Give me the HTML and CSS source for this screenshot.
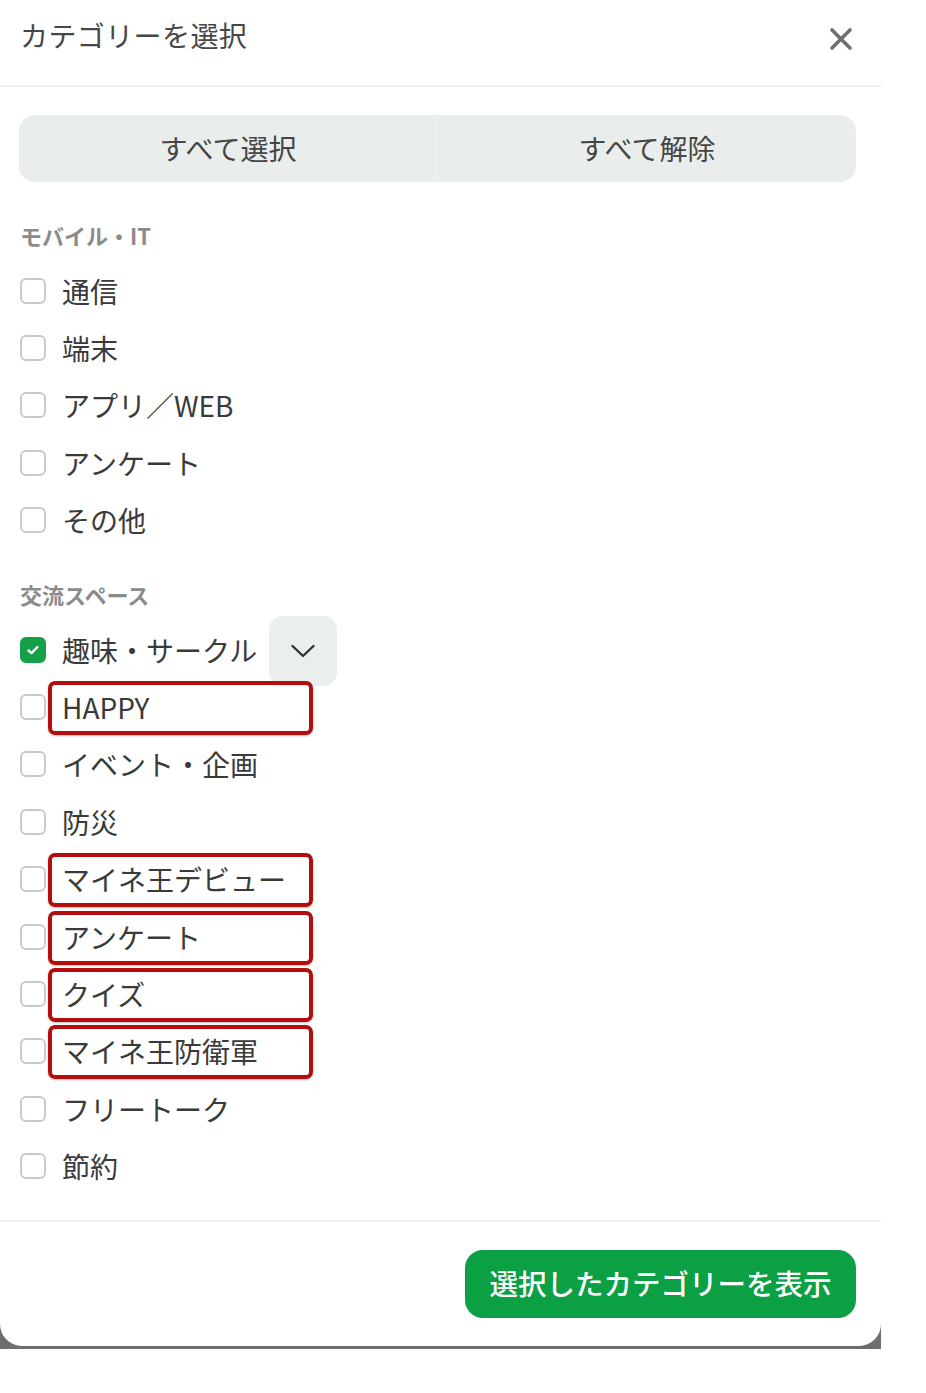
FILE: index.html
```html
<!DOCTYPE html>
<html lang="ja">
<head>
<meta charset="utf-8">
<title>カテゴリーを選択</title>
<link rel="stylesheet" href="styles.css">
</head>
<body>
<div class="frame">
  <div class="modal">
    <header class="modal-header">
      <h1 class="modal-title">カテゴリーを選択</h1>
      <button class="close-btn" aria-label="閉じる">
        <svg width="24" height="24" viewBox="0 0 24 24"><path d="M3 3 L21 21 M21 3 L3 21" stroke="#6f6f6f" stroke-width="3.6" stroke-linecap="round" fill="none"/></svg>
      </button>
    </header>

    <div class="modal-body">
      <div class="toggle-group">
        <button class="toggle-btn">すべて選択</button>
        <button class="toggle-btn toggle-right">すべて解除</button>
      </div>

      <section class="section">
        <h2 class="section-title">モバイル・IT</h2>
        <ul class="items">
          <li class="item"><span class="box"></span><span class="label">通信</span></li>
          <li class="item"><span class="box"></span><span class="label">端末</span></li>
          <li class="item"><span class="box"></span><span class="label">アプリ／WEB</span></li>
          <li class="item"><span class="box"></span><span class="label">アンケート</span></li>
          <li class="item"><span class="box"></span><span class="label">その他</span></li>
        </ul>
      </section>

      <section class="section section-2">
        <h2 class="section-title">交流スペース</h2>
        <ul class="items">
          <li class="item">
            <span class="box checked">
              <svg width="16" height="16" viewBox="0 0 16 16"><path d="M3.5 8.5 L6.5 11.2 L12.5 5" stroke="#fff" stroke-width="2.4" stroke-linecap="round" stroke-linejoin="round" fill="none"/></svg>
            </span>
            <span class="label">趣味・サークル</span>
            <button class="expand-btn" aria-label="開く">
              <svg width="26" height="16" viewBox="0 0 26 16"><path d="M2.5 3 L13 13 L23.5 3" stroke="#333" stroke-width="2.4" stroke-linecap="round" stroke-linejoin="round" fill="none"/></svg>
            </button>
          </li>
          <li class="item"><span class="box"></span><span class="label marked">HAPPY</span></li>
          <li class="item"><span class="box"></span><span class="label">イベント・企画</span></li>
          <li class="item"><span class="box"></span><span class="label">防災</span></li>
          <li class="item"><span class="box"></span><span class="label marked">マイネ王デビュー</span></li>
          <li class="item"><span class="box"></span><span class="label marked">アンケート</span></li>
          <li class="item"><span class="box"></span><span class="label marked">クイズ</span></li>
          <li class="item"><span class="box"></span><span class="label marked">マイネ王防衛軍</span></li>
          <li class="item"><span class="box"></span><span class="label">フリートーク</span></li>
          <li class="item"><span class="box"></span><span class="label">節約</span></li>
        </ul>
      </section>
    </div>

    <footer class="modal-footer">
      <button class="submit-btn">選択したカテゴリーを表示</button>
    </footer>
  </div>
</div>
</body>
</html>
```

FILE: styles.css
```css
*, *::before, *::after {
  box-sizing: border-box;
}

html, body {
  margin: 0;
  padding: 0;
  background: #ffffff;
}

body {
  font-family: "Noto Sans CJK JP", "Noto Sans", sans-serif;
  color: #3a3a3a;
}

button {
  font-family: inherit;
  border: none;
  cursor: pointer;
}

.frame {
  width: 881px;
  background: #6e6e6e;
  padding-bottom: 3px;
}

.modal {
  background: #ffffff;
  border-radius: 0 0 22px 22px;
  display: flex;
  flex-direction: column;
}

.modal-header {
  height: 87px;
  border-bottom: 2px solid #edf0ef;
  display: flex;
  align-items: flex-start;
  justify-content: space-between;
  padding: 0 28px 0 20px;
}

.modal-title {
  margin: 0;
  padding-top: 15px;
  font-size: 28px;
  font-weight: 400;
  line-height: 40px;
  color: #474747;
  letter-spacing: 0.4px;
}

.close-btn {
  background: transparent;
  padding: 0;
  margin-top: 27px;
  width: 24px;
  height: 24px;
  display: flex;
}

.modal-body {
  padding: 28px 25px 25px 20px;
  display: flex;
  flex-direction: column;
}

.toggle-group {
  display: flex;
  width: 837px;
  height: 67px;
  margin-left: -1px;
  background: #e9edeb;
  border-radius: 16px;
  overflow: hidden;
}

.toggle-btn {
  flex: 1;
  background: transparent;
  font-size: 28px;
  color: #454545;
  padding: 0 0 2px;
}

.toggle-right {
  border-left: 1px solid #f1f4f2;
}

.section {
  margin-top: 38px;
}

.section-2 {
  margin-top: 30px;
}

.section-title {
  margin: 0 0 12px;
  height: 30px;
  line-height: 30px;
  font-size: 22px;
  font-weight: 700;
  color: #8a8c8b;
}

.items {
  list-style: none;
  margin: 0;
  padding: 0;
}

.item {
  height: 57.4px;
  display: flex;
  align-items: center;
  gap: 16px;
}

.box {
  width: 26px;
  height: 26px;
  flex: none;
  border: 2px solid #c9cbca;
  border-radius: 6px;
  background: #fff;
  display: flex;
  align-items: center;
  justify-content: center;
}

.box.checked {
  border-color: #14a048;
  background: #14a048;
}

.label {
  font-size: 28px;
  line-height: 40px;
  color: #3a3a3a;
  position: relative;
  white-space: nowrap;
}

.label.marked::after {
  content: "";
  position: absolute;
  left: -14px;
  top: -6px;
  width: 265px;
  height: 54px;
  border: 4px solid #b30d0d;
  border-radius: 7px;
  box-shadow: 0 1px 2px rgba(0, 0, 0, 0.25);
}

.expand-btn {
  width: 68px;
  height: 70px;
  margin: -6px 0 -8px -4px;
  background: #eaeeec;
  border-radius: 14px;
  display: flex;
  align-items: center;
  justify-content: center;
  padding: 0;
}

.modal-footer {
  border-top: 2px solid #edf0ef;
  padding: 28px 25px 28px;
  display: flex;
  justify-content: flex-end;
}

.submit-btn {
  height: 68px;
  padding: 0 24.5px 3px;
  background: #0aa043;
  color: #ffffff;
  border-radius: 18px;
  font-size: 28.5px;
  font-weight: 500;
}
```
